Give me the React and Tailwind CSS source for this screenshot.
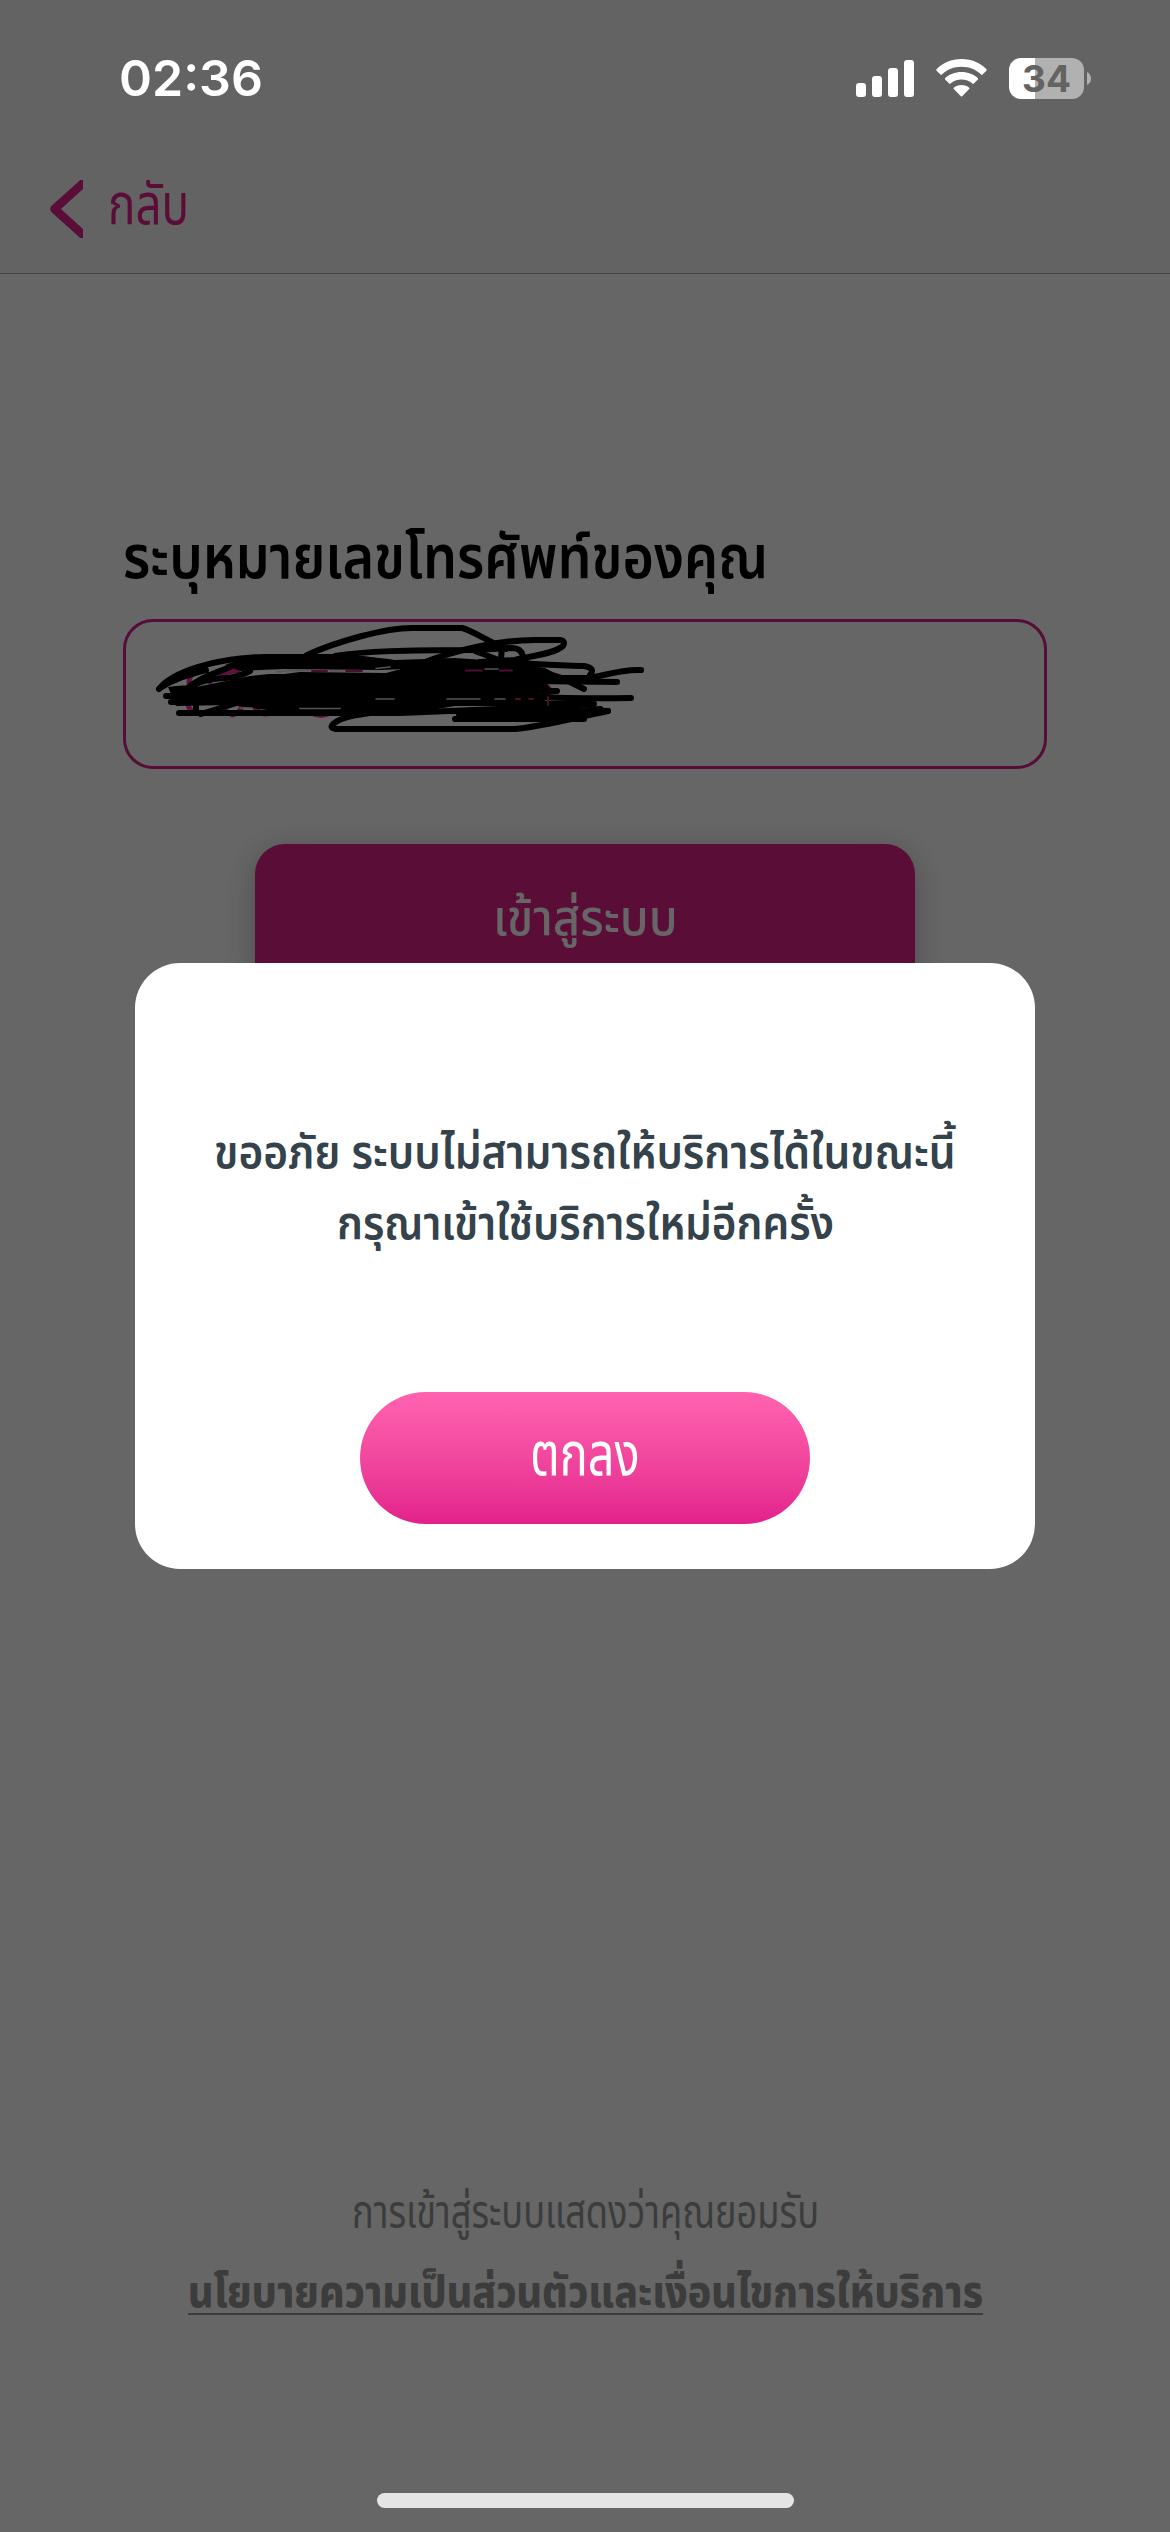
import { useLayoutEffect, useRef, useState } from "react";

const THAI = "font-['Noto_Sans_Thai','Noto_Sans',sans-serif]";

// One line of text, condensed or widened horizontally to a fixed width.
function FitText({ width, className = "", children }) {
  const ref = useRef(null);
  const [scale, setScale] = useState(1);
  useLayoutEffect(() => {
    setScale(width / ref.current.offsetWidth);
  }, [width]);
  return (
    <div className={`flex leading-none ${className}`} style={{ width }}>
      <span
        ref={ref}
        className="block shrink-0 origin-left whitespace-nowrap"
        style={{ transform: `scaleX(${scale})` }}
      >
        {children}
      </span>
    </div>
  );
}

function StatusBar() {
  return (
    <div className="absolute inset-x-0 top-0 flex h-[156px] items-center justify-between pr-[79px] pl-[119px] text-white">
      <span className="font-['Inter',sans-serif] text-[50px] leading-none font-semibold">02:36</span>
      <div className="flex items-center">
        <div className="flex h-[37px] items-end gap-[6px]">
          <i className="h-[14px] w-[10px] rounded-[3px] bg-white" />
          <i className="h-[21px] w-[10px] rounded-[3px] bg-white" />
          <i className="h-[29px] w-[10px] rounded-[3px] bg-white" />
          <i className="h-[37px] w-[10px] rounded-[3px] bg-white" />
        </div>
        <svg className="ml-[22px] h-[38px] w-[51px]" viewBox="0 0 51 38" fill="#fff">
          <path d="M25.5 0C35.5 0 44.5 3.9 50.5 10.3Q51 11 50.4 11.7L46.5 15.5Q45.8 16.1 45.1 15.5C40 10.4 33 7.7 25.5 7.7S11 10.4 5.9 15.5Q5.2 16.1 4.5 15.5L.6 11.7Q0 11 .5 10.3C6.5 3.9 15.5 0 25.5 0Z" />
          <path d="M25.5 13C32 13 37.8 15.3 41.9 19.2Q42.5 19.9 41.9 20.5L37.8 24.6Q37.1 25.2 36.4 24.6C33.5 22 29.7 20.5 25.5 20.5S17.5 22 14.6 24.6Q13.9 25.2 13.2 24.6L9.1 20.5Q8.5 19.9 9.1 19.2C13.2 15.3 19 13 25.5 13Z" />
          <path d="M25.5 26C28.5 26 31.2 27.1 33.2 28.7Q33.9 29.4 33.2 30.1L26.2 37.2Q25.5 37.8 24.8 37.2L17.8 30.1Q17.1 29.4 17.8 28.7C19.8 27.1 22.500 26 25.5 26Z" />
        </svg>
        <div className="ml-[22px] flex items-center gap-[3px]">
          <div className="flex h-[41px] w-[75px] items-center justify-center rounded-[12px] bg-[linear-gradient(to_right,#fff_26px,#b1b1b1_26px)] font-['Inter',sans-serif] text-[37px] leading-none font-bold text-[#636363]">
            34
          </div>
          <svg className="h-[13px] w-[4px]" viewBox="0 0 4 13" fill="#b1b1b1">
            <path d="M0 0Q4 2 4 6.5T0 13Z" />
          </svg>
        </div>
      </div>
    </div>
  );
}

// Hand-drawn marker strokes that cover the phone number.
function Scribble() {
  return (
    <svg
      className="absolute top-0 left-[27px] h-[130px] w-[510px]"
      viewBox="150 619 510 130"
      fill="none"
      stroke="#000"
      strokeWidth="6"
      strokeLinecap="round"
      strokeLinejoin="round"
    >
      <g stroke="#650f40" strokeWidth="5" strokeLinecap="butt">
        <path d="M189 684Q189 676 194 672M210 672V684M219 678Q222 671 240 671M536 686Q544 682 550 690" />
        <path d="M188 704Q189 710 194 713M219 706L232 715Q240 714 242 705M254 706Q262 717 270 713M311 713Q322 718 330 713M343 706L350 713M359 706L354 713M380 705V710" />
      </g>
      <path
        fill="#000"
        stroke="none"
        d="M168 687Q185 684 196 687L226 681L250 676L270 674L284 674L300 672L386 673L420 664L500 660L545 668L560 676L547 684L553 692L540 706L455 706L400 715L290 713L230 705L176 706Z"
      />
      <path fill="#000" stroke="none" d="M225 665Q245 657 264 656L330 655Q370 656 395 660L455 658L515 662L545 672L430 668L380 670L284 669L240 671L232 668Z" />
      <path d="M159 689C172 672 214 658 264 657L330 657C355 657 376 661 398 665" />
      <path d="M160 688C175 678 192 674 206 670M185 690C198 678 214 674 232 666M196 684C215 675 230 682 250 671" />
      <path d="M307 655C338 641 385 628 412 628H462C471 630 488 641 506 649" />
      <path d="M335 656C365 651 405 650 475 650L512 648Q521 648 523 656M502 645L501 660M526 662V674" />
      <path d="M420 664C450 652 495 640 535 640H560Q566 641 563 646C554 654 530 656 515 660L480 662" />
      <path d="M475 651C492 657 506 665 530 668L562 678L584 689" />
      <path d="M500 661C530 665 560 665 584 666Q596 668 590 675" />
      <path d="M530 678H590C606 675 622 669 641 670" />
      <path d="M530 681L617 682M520 691H557M530 696Q560 699 631 698M500 704H594M450 711H600M455 719H584" />
      <path d="M166 696H270M171 702H250M179 713H400L520 708L608 711" />
      <path strokeWidth="8" d="M460 714H560L600 710" />
      <path d="M608 711C574 718 540 727 515 729H336Q329 728 333 724C344 714 370 714 400 709" />
      <path d="M196 699V712M201 714L240 702" />
      <g stroke="#555" strokeWidth="1.5">
        <path d="M277 672L290 670.500H310M330 671H343M376 668.500L390 667M447 699H480M495 699H505M376 699H394M300 708.500H340M485 669H498M240 708H252" />
      </g>
      <g stroke="#4c0d31" strokeWidth="2">
        <path d="M312 671H327M346 671H362M466 670.500H482M500 670.500H512M516 699H520M529 699H533M548 697V705" />
      </g>
    </svg>
  );
}

export default function App() {
  return (
    <main className={`relative flex h-[2532px] w-[1170px] flex-col overflow-hidden bg-white ${THAI}`}>
      <header className="flex h-[274px] items-start border-b border-[#b0b0b0] bg-[#f7f7f7] pt-[180px] pl-[50px] text-[#e0218a]">
        <svg className="h-[58px] w-[33px]" viewBox="50 180 33 58" fill="none" stroke="currentColor" strokeWidth="8.5" strokeLinejoin="round">
          <path d="M86 180.5L54.5 209L86 237.5" />
        </svg>
        <FitText width={81} className="mt-[-1px] ml-[25px] text-[57px] font-normal">กลับ</FitText>
      </header>

      <section className="flex flex-col px-[123px] pt-[256px]">
        <FitText width={645} className="text-[60px] font-semibold text-black">ระบุหมายเลขโทรศัพท์ของคุณ</FitText>
        <div className="mt-[29px] h-[150px] rounded-[30px] border-[3px] border-[#d6218a]" />
        <button className="mt-[75px] flex h-[150px] w-[660px] justify-center self-center rounded-[30px] bg-[#e0218a] pt-[51px] text-white shadow-[0_6px_30px_rgba(0,0,0,0.25)]">
          <FitText width={185} className="text-[50px] font-medium">เข้าสู่ระบบ</FitText>
        </button>
      </section>

      <footer className="mt-auto flex flex-col items-center pb-[217px] text-[#969696]">
        <FitText width={467} className="text-[46px] font-normal">การเข้าสู่ระบบแสดงว่าคุณยอมรับ</FitText>
        <div className="mt-[34px] h-[44px] border-b-2 border-[#969696]">
          <FitText width={795} className="text-[45px] font-extrabold">นโยบายความเป็นส่วนตัวและเงื่อนไขการให้บริการ</FitText>
        </div>
      </footer>

      <div className="absolute inset-0 flex flex-col items-center bg-black/60">
        <div className="relative mt-[619px] h-[150px] w-[924px]">
          <Scribble />
        </div>
        <div role="dialog" className="mt-[194px] flex h-[606px] w-[900px] flex-col items-center rounded-[45px] bg-white pt-[168px] text-[#33424b]">
          <FitText width={742} className="text-[46px] font-semibold">ขออภัย ระบบไม่สามารถให้บริการได้ในขณะนี้</FitText>
          <FitText width={497} className="mt-[25px] text-[46px] font-semibold">กรุณาเข้าใช้บริการใหม่อีกครั้ง</FitText>
          <button className="mt-auto mb-[45px] flex h-[132px] w-[450px] justify-center rounded-full bg-linear-to-b from-[#ff63b0] to-[#e3208c] pt-[35px] text-white">
            <FitText width={110} className="text-[60px] font-normal">ตกลง</FitText>
          </button>
        </div>
        <div className="mt-auto mb-[24px] h-[15px] w-[417px] rounded-full bg-[#e5e5e5]" />
      </div>
      <StatusBar />
    </main>
  );
}
